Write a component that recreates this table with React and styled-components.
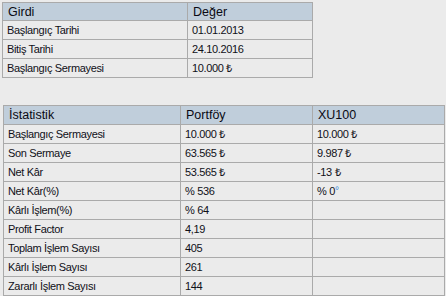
import React from "react";
import styled, { createGlobalStyle } from "styled-components";

const GlobalStyle = createGlobalStyle`
    html, body {
        margin: 0;
        padding: 0;
        background: #ebebeb;
    }
    body {
        font-family: "Liberation Sans", Arial, sans-serif;
        color: #000;
    }
`;

const girdi = [
    ["Başlangıç Tarihi", "01.01.2013"],
    ["Bitiş Tarihi", "24.10.2016"],
    ["Başlangıç Sermayesi", "10.000 ₺"],
];

const stats = [
    ["Başlangıç Sermayesi", "10.000 ₺", "10.000 ₺"],
    ["Son Sermaye", "63.565 ₺", "9.987 ₺"],
    ["Net Kâr", "53.565 ₺", "-13 ₺"],
    ["Net Kâr(%)", "% 536", "deg"],
    ["Kârlı İşlem(%)", "% 64", ""],
    ["Profit Factor", "4,19", ""],
    ["Toplam İşlem Sayısı", "405", ""],
    ["Kârlı İşlem Sayısı", "261", ""],
    ["Zararlı İşlem Sayısı", "144", ""],
];

function App() {
    return <Page>
        <GlobalStyle />
        <InputTable>
            <colgroup>
                <Col $w={185} />
                <Col $w={125} />
            </colgroup>
            <thead>
                <tr>
                    <Th $h={17}>Girdi</Th>
                    <Th $h={17}>Değer</Th>
                </tr>
            </thead>
            <tbody>
                {girdi.map(([label, value]) => (
                    <tr key={label}>
                        <Td>{label}</Td>
                        <Td>{value}</Td>
                    </tr>
                ))}
            </tbody>
        </InputTable>

        <StatsTable>
            <colgroup>
                <Col $w={177} />
                <Col $w={132} />
                <Col $w={132} />
            </colgroup>
            <thead>
                <tr>
                    <Th>İstatistik</Th>
                    <Th>Portföy</Th>
                    <Th>XU100</Th>
                </tr>
            </thead>
            <tbody>
                {stats.map(([label, a, b]) => (
                    <tr key={label}>
                        <Td>{label}</Td>
                        <Td>{a}</Td>
                        <Td>
                            {b === "deg" ? <>% 0<Ring>°</Ring></> : b}
                        </Td>
                    </tr>
                ))}
            </tbody>
        </StatsTable>
    </Page>;
}

export default App;

const Page = styled.div`
    display: flex;
    flex-direction: column;
    align-items: flex-start;
    padding: 2px 0 0 2px;
    height: 296px;
    box-sizing: border-box;
    overflow: hidden;
`;

const Table = styled.table`
    border-collapse: collapse;
    table-layout: fixed;
    background: #ebebeb;
`;

const InputTable = styled(Table)`
    width: 310px;
`;

const StatsTable = styled(Table)`
    width: 441px;
    margin-top: 27px;
    margin-left: 1px;
`;

const Col = styled.col`
    width: ${p => p.$w}px;
`;

const Th = styled.th`
    height: ${p => p.$h || 18}px;
    padding: 0 0 0 5px;
    border: 1px solid #aaaaaa;
    background: #c0cedb;
    font-weight: normal;
    font-size: 12.5px;
    text-align: left;
    line-height: 14px;
    color: #0a0a14;
    white-space: nowrap;
`;

const Td = styled.td`
    height: 18px;
    padding: 0 0 0 4px;
    border: 1px solid #aaaaaa;
    font-size: 11px;
    letter-spacing: -0.35px;
    line-height: 13px;
    color: #101018;
    white-space: nowrap;
    overflow: hidden;
`;

const Ring = styled.span`
    color: #3d8de0;
    font-size: 10px;
    vertical-align: 1px;
`;
